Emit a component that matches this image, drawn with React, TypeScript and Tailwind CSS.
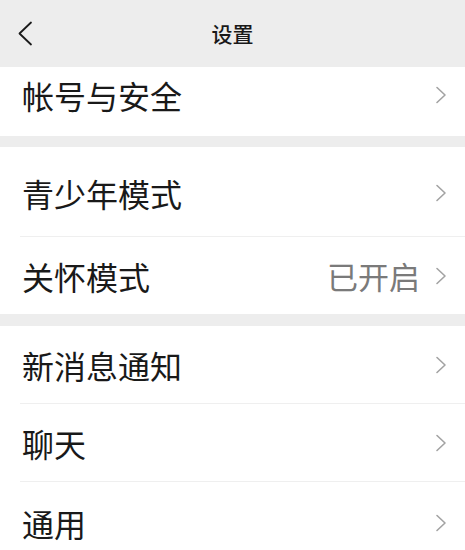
import React from "react";

const Chevron = () => (
  <svg width="12" height="18" viewBox="0 0 12 18" className="shrink-0">
    <polyline
      points="2,1.5 10,9 2,16.5"
      fill="none"
      stroke="#a3a3a3"
      strokeWidth="1.6"
      strokeLinecap="round"
      strokeLinejoin="round"
    />
  </svg>
);

function Row({
  label,
  value,
  divider,
  className = "h-[78px]",
}: {
  label: string;
  value?: string;
  divider?: boolean;
  className?: string;
}) {
  return (
    <div className="relative bg-white">
      <div className={`flex items-center justify-between pl-[22px] pr-[18px] ${className}`}>
        <span className="text-[32px] leading-none text-[#191919]">{label}</span>
        <div className="flex items-center gap-[15px]">
          {value && <span className="text-[31px] leading-none text-[#7a7a7a]">{value}</span>}
          <Chevron />
        </div>
      </div>
      {divider && <div className="ml-[20px] h-px bg-[#efefef]" />}
    </div>
  );
}

export default function App() {
  return (
    <div
      className="h-[550px] w-[465px] overflow-hidden bg-[#ededed]"
      style={{ fontFamily: '"Noto Sans CJK SC", "Noto Sans", sans-serif' }}
    >
      <header className="relative flex h-[67px] items-center justify-center bg-[#ededed]">
        <svg
          width="16"
          height="26"
          viewBox="0 0 16 26"
          className="absolute left-[17px] top-[21px]"
        >
          <polyline
            points="14,1.5 2.5,12.5 14,23.5"
            fill="none"
            stroke="#1a1a1a"
            strokeWidth="1.8"
            strokeLinecap="round"
            strokeLinejoin="round"
          />
        </svg>
        <h1 className="text-[21px] font-medium leading-none text-[#191919]">设置</h1>
      </header>

      <div className="bg-white">
        <Row label="帐号与安全" className="h-[69px] pb-[13px]" />
      </div>

      <div className="mt-[11px] bg-white">
        <Row label="青少年模式" divider className="h-[89px] pt-[2px]" />
        <Row label="关怀模式" value="已开启" className="h-[77px]" />
      </div>

      <div className="mt-[12px] bg-white">
        <Row label="新消息通知" divider className="h-[77px]" />
        <Row label="聊天" divider className="h-[77px]" />
        <Row label="通用" className="h-[78px] pt-[4px]" />
      </div>
    </div>
  );
}
